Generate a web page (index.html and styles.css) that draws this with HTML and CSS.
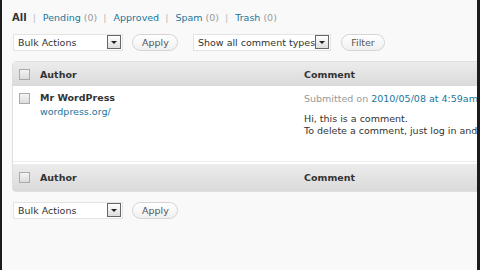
FILE: index.html
```html
<!DOCTYPE html>
<html lang="en">
<head>
    <meta charset="UTF-8">
    <title>Comments</title>
    <link rel="stylesheet" href="styles.css">
</head>
<body>
<div class="screen">
    <ul class="subsubsub">
        <li><b>All</b> <span class="sep">|</span></li>
        <li><a href="#">Pending</a> <span class="count">(0)</span> <span class="sep">|</span></li>
        <li><a href="#">Approved</a> <span class="sep">|</span></li>
        <li><a href="#">Spam</a> <span class="count">(0)</span> <span class="sep">|</span></li>
        <li><a href="#">Trash</a> <span class="count">(0)</span></li>
    </ul>

    <div class="tablenav">
        <div class="select bulk"><span>Bulk Actions</span><i class="arrow"></i></div>
        <span class="button">Apply</span>
        <div class="select types"><span>Show all comment types</span><i class="arrow"></i></div>
        <span class="button filter">Filter</span>
    </div>

    <div class="widefat">
        <div class="row head">
            <div class="cb"><i class="check"></i></div>
            <div>Author</div>
            <div>Comment</div>
        </div>
        <div class="row item">
            <div class="cb"><i class="check"></i></div>
            <div>
                <strong>Mr WordPress</strong>
                <a href="#" class="url">wordpress.org/</a>
            </div>
            <div class="comment">
                <p class="submitted">Submitted on <a href="#">2010/05/08 at 4:59am</a></p>
                <p>Hi, this is a comment.<br>To delete a comment, just log in and view the post's comments.</p>
            </div>
        </div>
        <div class="row head foot">
            <div class="cb"><i class="check"></i></div>
            <div>Author</div>
            <div>Comment</div>
        </div>
    </div>

    <div class="tablenav bottom">
        <div class="select bulk"><span>Bulk Actions</span><i class="arrow"></i></div>
        <span class="button">Apply</span>
    </div>
</div>
</body>
</html>
```

FILE: styles.css
```css
html, body {
    margin: 0;
    padding: 0;
}
body {
    font-family: "DejaVu Sans", Verdana, sans-serif;
    font-size: 9.5px;
    color: #333;
}
a {
    color: #21759b;
    text-decoration: none;
}
.screen {
    height: 270px;
    background: #f9f9f9;
    border-left: 2px solid #1c1c1c;
    border-right: 3px solid #1c1c1c;
    padding-left: 10px;
    overflow: hidden;
}
.subsubsub {
    list-style: none;
    margin: 0;
    padding: 11px 0 0;
    display: flex;
    gap: 4px;
    height: 13px;
    line-height: 13px;
    white-space: nowrap;
}
.subsubsub b {
    color: #333;
    font-size: 10px;
}
.sep {
    color: #bbb;
    margin: 0 3px;
}
.count {
    color: #999;
}
.tablenav {
    display: flex;
    align-items: center;
    height: 18px;
    margin-top: 9px;
}
.select {
    display: flex;
    align-items: center;
    justify-content: space-between;
    height: 17px;
    background: #fff;
    border: 1px solid #e4e4e4;
    box-sizing: border-box;
    padding: 0 1px 0 4px;
    color: #333;
    white-space: nowrap;
}
.bulk {
    width: 110px;
    margin-left: 1px;
}
.types {
    width: 138px;
    margin-left: 15px;
}
.arrow {
    display: block;
    width: 12px;
    height: 12px;
    border: 1px solid #666;
    background: linear-gradient(#fff, #ddd);
    position: relative;
    flex: none;
}
.arrow::after {
    content: "";
    position: absolute;
    left: 3px;
    top: 5px;
    border: 3px solid transparent;
    border-top: 3px solid #222;
    border-bottom: 0;
}
.types .arrow {
    margin-left: -4px;
}
.button {
    display: inline-block;
    height: 17px;
    line-height: 15px;
    box-sizing: border-box;
    padding: 0 9px;
    margin-left: 9px;
    border: 1px solid #d4d4d4;
    border-radius: 10px;
    background: linear-gradient(#fff, #f0f0f0);
    color: #555;
    width: 46px;
    text-align: center;
}
.filter {
    width: 44px;
    margin-left: 10px;
    padding: 0;
}
.widefat {
    width: 520px;
    margin-top: 10px;
    border: 1px solid #dfdfdf;
    border-radius: 4px 0 0 4px;
    background: #fff;
}
.row {
    display: grid;
    grid-template-columns: 27px 264px 1fr;
}
.head {
    height: 24px;
    align-items: center;
    background: linear-gradient(#ececec, #dadada);
    font-weight: bold;
    color: #333;
}
.foot {
    margin-top: 2px;
    height: 27px;
}
.cb {
    padding-left: 6px;
}
.check {
    display: block;
    width: 9px;
    height: 9px;
    border: 1px solid #aaa;
    background: linear-gradient(#f4f4f4, #dcdcdc);
}
.item {
    height: 76px;
    padding-top: 7px;
    box-sizing: border-box;
    border-bottom: 1px solid #eee;
}
.item strong {
    display: block;
    color: #333;
    margin-top: -1px;
}
.url {
    display: block;
    margin-top: 3px;
}
.comment {
    white-space: nowrap;
}
.comment p {
    margin: 0;
    line-height: 12px;
}
.submitted {
    color: #999;
    margin-bottom: 8px !important;
}
.tablenav.bottom {
    margin-top: 9px;
}
```
